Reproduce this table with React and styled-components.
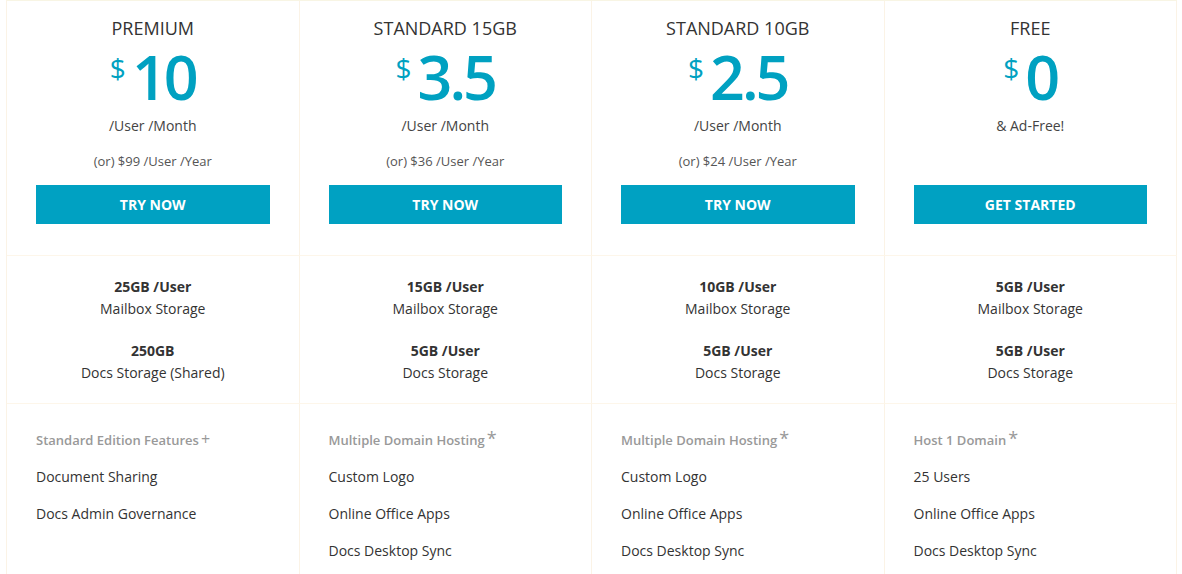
import styled, { createGlobalStyle } from "styled-components";

const GlobalStyle = createGlobalStyle`
  body {
    margin: 0;
    background: #fff;
    font-family: "Open Sans", "Liberation Sans", sans-serif;
    color: #333;
  }
`;

const Table = styled.div`
  margin-left: 6px;
  width: 1170px;
  display: grid;
  grid-template-columns: repeat(4, 1fr);
  border-top: 1px solid #f8f5e4;
  border-left: 1px solid #fbf3e6;
`;

const Cell = styled.div`
  border-right: 1px solid #fbf3e6;
  border-bottom: 1px solid #fdf6ea;
  box-sizing: border-box;
  height: ${(p) => p.h}px;
`;

const PlanCell = styled(Cell)`
  padding: 15px 29px 0;
  text-align: center;
`;

const PlanName = styled.div`
  font-size: 18px;
  line-height: 24px;
  color: #333;
`;

const Price = styled.div`
  display: flex;
  justify-content: center;
  color: #00a1c1;
  margin-top: 6px;
  height: 62px;
`;

const Currency = styled.span`
  font-size: 28px;
  line-height: 28px;
  margin-top: 8px;
  margin-right: 6px;
`;

const Amount = styled.span`
  font-size: 61px;
  line-height: 62px;
  font-weight: 600;
  letter-spacing: -3px;
`;

const Per = styled.div`
  font-size: 14px;
  line-height: 20px;
  color: #444;
  margin-top: 8px;
`;

const Yearly = styled.div`
  font-size: 13px;
  line-height: 18px;
  color: #555;
  margin-top: 16px;
  height: 18px;
`;

const Button = styled.button`
  display: block;
  width: 100%;
  height: 39px;
  margin-top: 15px;
  border: none;
  background: #00a1c2;
  color: #fff;
  font-family: "Open Sans", "Liberation Sans", sans-serif;
  font-size: 14px;
  font-weight: 700;
  cursor: pointer;
`;

const StorageCell = styled(Cell)`
  padding-top: 20px;
  text-align: center;
  font-size: 14px;
  line-height: 22px;
`;

const Storage = styled.div`
  margin-bottom: 20px;
`;

const StrongLine = styled.div`
  font-weight: 700;
  color: #333;
`;

const FeatureCell = styled(Cell)`
  padding: 24px 29px 0;
  border-bottom: none;
`;

const FeatureHead = styled.div`
  font-size: 13px;
  font-weight: 600;
  color: #999;
  height: 24px;
  line-height: 24px;
  margin-bottom: 13px;
`;

const Mark = styled.span`
  font-weight: 400;
  font-size: ${(p) => (p.star ? 18 : 16)}px;
  line-height: 1;
  margin-left: 2px;
  color: #999;
`;

const Feature = styled.div`
  font-size: 14px;
  line-height: 24px;
  color: #333;
  margin-bottom: 13px;
`;

const plans = [
  {
    name: "PREMIUM",
    amount: "10",
    per: "/User /Month",
    yearly: "(or) $99 /User /Year",
    cta: "TRY NOW",
    storage: [
      ["25GB /User", "Mailbox Storage"],
      ["250GB", "Docs Storage (Shared)"],
    ],
    head: "Standard Edition Features",
    mark: "+",
    features: ["Document Sharing", "Docs Admin Governance"],
  },
  {
    name: "STANDARD 15GB",
    amount: "3.5",
    per: "/User /Month",
    yearly: "(or) $36 /User /Year",
    cta: "TRY NOW",
    storage: [
      ["15GB /User", "Mailbox Storage"],
      ["5GB /User", "Docs Storage"],
    ],
    head: "Multiple Domain Hosting",
    mark: "*",
    features: ["Custom Logo", "Online Office Apps", "Docs Desktop Sync"],
  },
  {
    name: "STANDARD 10GB",
    amount: "2.5",
    per: "/User /Month",
    yearly: "(or) $24 /User /Year",
    cta: "TRY NOW",
    storage: [
      ["10GB /User", "Mailbox Storage"],
      ["5GB /User", "Docs Storage"],
    ],
    head: "Multiple Domain Hosting",
    mark: "*",
    features: ["Custom Logo", "Online Office Apps", "Docs Desktop Sync"],
  },
  {
    name: "FREE",
    amount: "0",
    per: "& Ad-Free!",
    yearly: "",
    cta: "GET STARTED",
    storage: [
      ["5GB /User", "Mailbox Storage"],
      ["5GB /User", "Docs Storage"],
    ],
    head: "Host 1 Domain",
    mark: "*",
    features: ["25 Users", "Online Office Apps", "Docs Desktop Sync"],
  },
];

const App = () => {
  return (
    <>
      <GlobalStyle />
      <Table>
        {plans.map((p) => (
          <PlanCell key={p.name} h={255}>
            <PlanName>{p.name}</PlanName>
            <Price>
              <Currency>$</Currency>
              <Amount>{p.amount}</Amount>
            </Price>
            <Per>{p.per}</Per>
            <Yearly>{p.yearly}</Yearly>
            <Button>{p.cta}</Button>
          </PlanCell>
        ))}
        {plans.map((p) => (
          <StorageCell key={p.name} h={148}>
            {p.storage.map(([a, b]) => (
              <Storage key={b}>
                <StrongLine>{a}</StrongLine>
                <div>{b}</div>
              </Storage>
            ))}
          </StorageCell>
        ))}
        {plans.map((p) => (
          <FeatureCell key={p.name} h={180}>
            <FeatureHead>
              {p.head}
              <Mark star={p.mark === "*"}>{p.mark}</Mark>
            </FeatureHead>
            {p.features.map((f) => (
              <Feature key={f}>{f}</Feature>
            ))}
          </FeatureCell>
        ))}
      </Table>
    </>
  );
};

export default App;
